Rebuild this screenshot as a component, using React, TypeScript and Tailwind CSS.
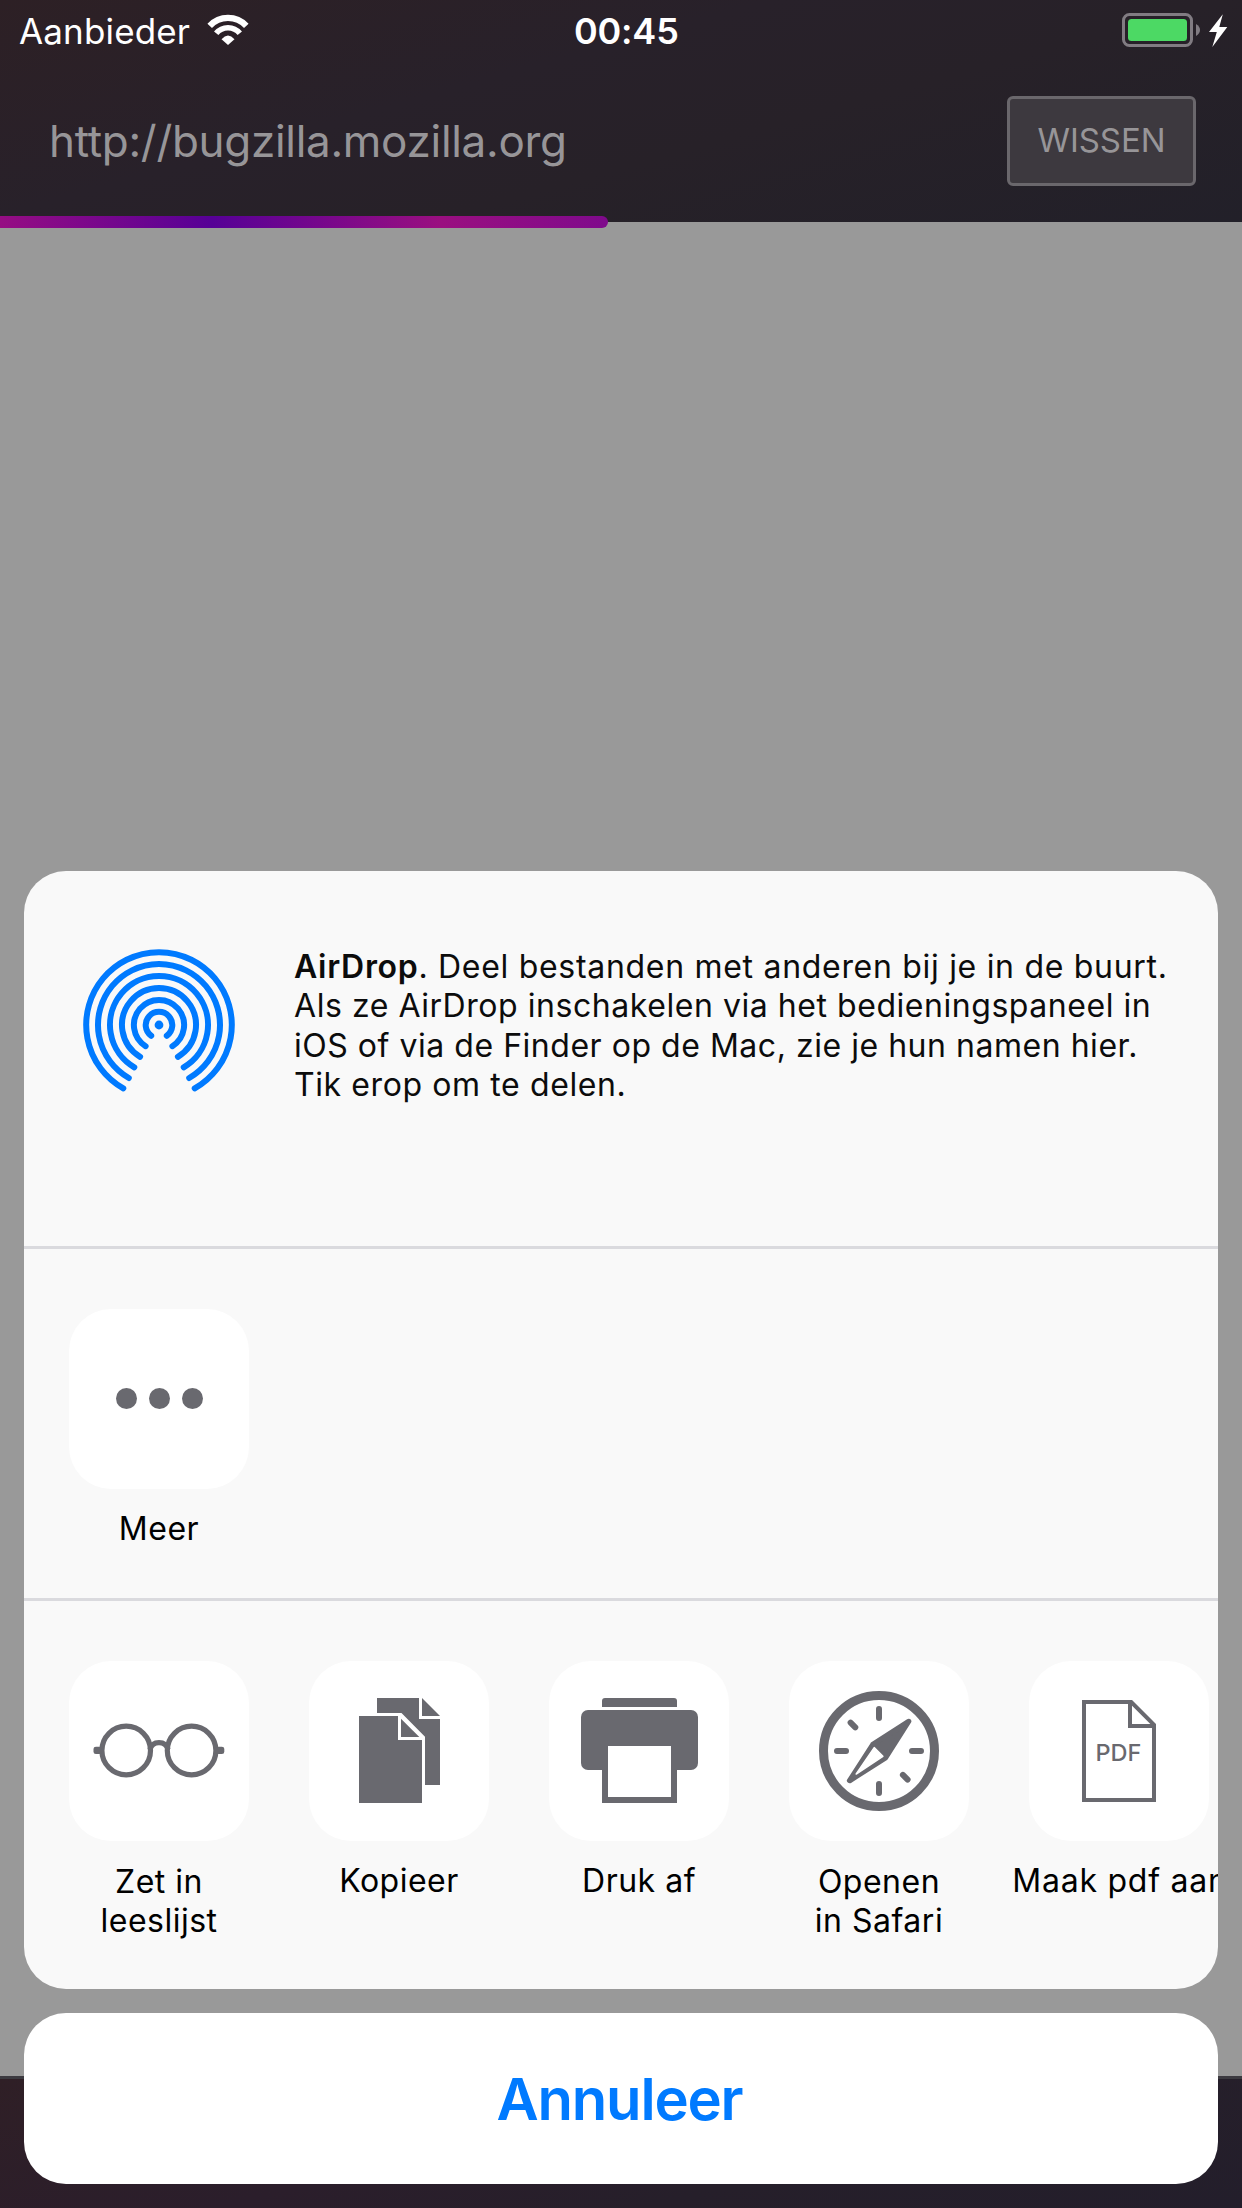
import type { ReactNode } from 'react';

const GLYPH = '#69696f';

function WifiIcon() {
  return (
    <svg className="h-8 w-[42px]" viewBox="207 14 42 32" fill="none" stroke="#fff">
      <path d="M209.7 25.8A25 25 0 0 1 246.3 25.8" strokeWidth="6.2" />
      <path d="M216.2 33.3A15.2 15.2 0 0 1 239.8 33.3" strokeWidth="5.6" />
      <path d="M228 45L221.5 39.2Q228 31.8 234.5 39.2Z" fill="#fff" stroke="none" />
    </svg>
  );
}

function BatteryIcon() {
  return (
    <svg className="h-[34px] w-[106px]" viewBox="1122 13 106 34">
      <rect x="1123.5" y="14.5" width="68" height="31" rx="6" fill="none" stroke="#817c82" strokeWidth="3" />
      <rect x="1128" y="19" width="59" height="22" rx="3.5" fill="#4cd964" />
      <path d="M1196 24Q1200 26.5 1200 30T1196 36Z" fill="#817c82" />
      <path d="M1222.8 14.2L1209 32H1216.8L1212.3 47L1227.3 27H1219.3Z" fill="#fff" />
    </svg>
  );
}

function AirDropIcon() {
  return (
    <svg className="h-[156px] w-[156px] shrink-0" viewBox="-78 -78 156 156" fill="none" stroke="#007aff" strokeWidth="6" strokeLinecap="round">
      <circle r="4.4" fill="#007aff" stroke="none" />
      <path d="M-7.8 10.8A13.3 13.3 0 1 1 7.8 10.8" />
      <path d="M-13.4 21.2A25.1 25.1 0 1 1 13.4 21.2" />
      <path d="M-18.9 31.8A37 37 0 1 1 18.9 31.8" />
      <path d="M-24.7 42.3A49 49 0 1 1 24.7 42.3" />
      <path d="M-30.2 53A61 61 0 1 1 30.2 53" />
      <path d="M-35.7 63.4A72.8 72.8 0 1 1 35.7 63.4" />
    </svg>
  );
}

function MoreIcon() {
  return (
    <svg className="size-full" viewBox="0 0 180 180" fill={GLYPH}>
      <circle cx="57.5" cy="89.5" r="10.5" />
      <circle cx="90.5" cy="89.5" r="10.5" />
      <circle cx="123.5" cy="89.5" r="10.5" />
    </svg>
  );
}

function GlassesIcon() {
  return (
    <svg className="size-full" viewBox="0 0 180 180" fill="none" stroke={GLYPH} strokeWidth="5.2">
      <circle cx="57.2" cy="89.5" r="24.3" />
      <circle cx="122.6" cy="89.5" r="24.3" />
      <path d="M81 88.5Q82.8 81.7 90 81.7T99 88.5" />
      <rect x="24.5" y="85.7" width="8.5" height="7.4" rx="2.4" fill={GLYPH} stroke="none" />
      <rect x="147" y="85.7" width="8.3" height="7.4" rx="2.4" fill={GLYPH} stroke="none" />
    </svg>
  );
}

function CopyIcon() {
  return (
    <svg className="size-full" viewBox="0 0 180 180" fill={GLYPH}>
      <path d="M68 37H110V58H131V124H116V75.7L92.5 52H68Z" />
      <path d="M113 37L131 55H113Z" />
      <path d="M50 55H89V79H113V142H50Z" />
      <path d="M92 57.7L110.3 76H92Z" />
    </svg>
  );
}

function PrinterIcon() {
  return (
    <svg className="size-full" viewBox="0 0 180 180" fill={GLYPH}>
      <path d="M53 46V40A3 3 0 0 1 56 37H125A3 3 0 0 1 128 40V46Z" />
      <rect x="32" y="49" width="117" height="60" rx="7" />
      <rect x="53" y="85" width="75" height="57" />
      <rect x="59" y="85" width="63" height="51" fill="#fff" />
    </svg>
  );
}

function CompassIcon() {
  return (
    <svg className="size-full" viewBox="0 0 180 180" fill="none" stroke={GLYPH} strokeLinecap="round" strokeLinejoin="round">
      <circle cx="90" cy="90" r="55.5" strokeWidth="9" />
      <path
        d="M90 48V57M90 123V132M48 90H57M123 90H132M61.6 61.6L66.3 66.3M113.9 113.9L118.6 118.6"
        strokeWidth="6"
      />
      <path d="M119.6 60.4L83.8 83.6L60.6 119.6L96.6 96.6Z" fill={GLYPH} strokeWidth="5.4" />
      <path d="M85.2 86.6L93.9 95.3L67.2 113Z" fill="#fff" stroke="#fff" strokeWidth="1.5" />
    </svg>
  );
}

function PdfIcon() {
  return (
    <svg className="size-full" viewBox="0 0 180 180" fill="none" stroke={GLYPH} strokeWidth="4">
      <path d="M55 41H102.2L125 63.8V139H55Z" />
      <path d="M101 41V65H125" />
      <text x="66.4" y="100.3" fill={GLYPH} stroke="none" fontSize="23.5" fontWeight="500" fontFamily="Inter, sans-serif">
        PDF
      </text>
    </svg>
  );
}

function Action({ icon, children }: { icon: ReactNode; children: ReactNode }) {
  return (
    <div className="flex w-60 shrink-0 flex-col items-center">
      <div className="size-[180px] rounded-[42px] bg-white">{icon}</div>
      <div className="mt-5 text-center text-[32px] leading-[39.33px] tracking-[0.5px] whitespace-nowrap text-black">
        {children}
      </div>
    </div>
  );
}

export default function App() {
  return (
    <div className="relative flex h-[2208px] w-[1242px] flex-col overflow-hidden bg-[#999999] font-[Inter,sans-serif]">
      <header className="relative h-[222px] bg-[linear-gradient(164.4deg,#2d2025_0%,#28212a_38%,#272128_60%,#222029_100%)]">
        <div className="flex h-[60px] items-center pr-[14px] pl-[19px] text-white">
          <div className="flex w-[555px] items-center gap-[17px]">
            <span className="pt-[2px] text-[35px] tracking-[0.15px]">Aanbieder</span>
            <WifiIcon />
          </div>
          <span className="flex-1 pt-[2px] text-[36px] font-semibold tracking-[-0.2px]">00:45</span>
          <BatteryIcon />
        </div>
        <div className="flex h-[162px] items-center justify-between pr-[46px] pl-[49px]">
          <span className="text-[44px] tracking-[-0.3px] text-[#979598]">http://bugzilla.mozilla.org</span>
          <button className="h-[90px] w-[189px] rounded-[6px] border-3 border-[#6a676c] bg-[#3d393f] text-[33px] tracking-[-0.1px] text-[#979598]">
            WISSEN
          </button>
        </div>
        <div className="absolute top-[216px] left-0 h-3 w-[608px] rounded-r-full bg-[linear-gradient(90deg,#960d83_0px,#560096_212px,#9a0f80_441px,#7f0a8c_608px)]" />
      </header>

      <main className="flex-1" />

      <footer className="h-[132px] border-t-3 border-[#3c3a40] bg-[linear-gradient(164.4deg,#2f1f26_0%,#2b1e2b_40%,#261f2a_65%,#231e2b_100%)]" />

      <div className="absolute inset-x-6 bottom-6 flex flex-col gap-6">
        <div className="h-[1118px] overflow-hidden rounded-[42px] bg-[#f9f9f9]">
          <section className="flex h-[378px] border-b-3 border-[#dadade] pt-[76px] pl-[57px]">
            <AirDropIcon />
            <p className="ml-[57px] text-[32px] leading-[39.33px] whitespace-nowrap text-[#0c0c0c]">
              <span className="block tracking-[0.7px]">
                <b className="font-semibold">AirDrop</b>. Deel bestanden met anderen bij je in de buurt.
              </span>
              <span className="block tracking-[0.55px]">Als ze AirDrop inschakelen via het bedieningspaneel in</span>
              <span className="block tracking-[0.53px]">iOS of via de Finder op de Mac, zie je hun namen hier.</span>
              <span className="block tracking-[0.6px]">Tik erop om te delen.</span>
            </p>
          </section>
          <section className="flex h-[352px] border-b-3 border-[#dadade] pt-[60px] pl-[15px]">
            <Action icon={<MoreIcon />}>Meer</Action>
          </section>
          <section className="flex pt-[60px] pl-[15px]">
            <Action icon={<GlassesIcon />}>
              <span className="block pt-px">
                Zet in
                <br />
                leeslijst
              </span>
            </Action>
            <Action icon={<CopyIcon />}>Kopieer</Action>
            <Action icon={<PrinterIcon />}>Druk af</Action>
            <Action icon={<CompassIcon />}>
              <span className="block pt-px">
                Openen
                <br />
                in Safari
              </span>
            </Action>
            <Action icon={<PdfIcon />}>
              <span className="pl-[2px] tracking-[0.75px]">Maak pdf aan</span>
            </Action>
          </section>
        </div>
        <button className="h-[171px] rounded-[42px] bg-white pt-[2px] pr-[3px] text-[58px] font-semibold tracking-[-1.2px] text-[#007aff]">
          Annuleer
        </button>
      </div>
    </div>
  );
}
